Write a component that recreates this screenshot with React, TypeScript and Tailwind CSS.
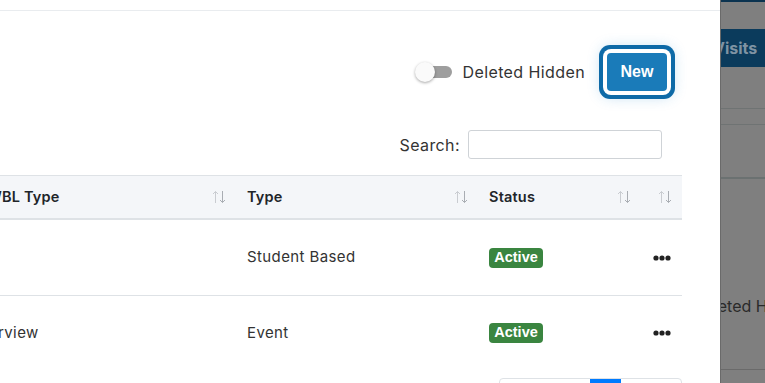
import React from "react";

const SortIcon = () => (
  <svg width="14" height="14" viewBox="0 0 14 14" fill="none" className="shrink-0">
    <path d="M3.5 13V1.5M1 4L3.5 1.5L6 4" stroke="#c9ccd1" strokeWidth="1" />
    <path d="M10.5 1V12.5M8 10L10.5 12.5L13 10" stroke="#a9adb3" strokeWidth="1" />
  </svg>
);

const Dots = () => (
  <svg width="18" height="6" viewBox="0 0 18 6" className="shrink-0">
    <circle cx="3" cy="3" r="2.6" fill="#222" />
    <circle cx="9" cy="3" r="2.6" fill="#222" />
    <circle cx="15" cy="3" r="2.6" fill="#222" />
  </svg>
);

const Badge = () => (
  <span className="inline-flex h-[20px] w-[54px] items-center justify-center rounded-[4px] bg-[#3a8540] text-[14.5px] font-bold tracking-normal text-white [font-family:'Liberation_Sans',Arial,sans-serif]">
    Active
  </span>
);

export default function App() {
  return (
    <div className="flex h-[383px] w-[765px] overflow-hidden bg-white text-[#212529] [font-family:Inter,'Noto_Sans',sans-serif]">
      <div className="flex w-[720px] shrink-0 flex-col overflow-hidden bg-white">
        <div className="h-[11px] shrink-0 border-b border-[#e9ecef]" />

        <div className="mt-[42px] flex h-[38px] items-center justify-end pr-[53px]">
          <div className="flex items-center">
            <div className="relative h-[12px] w-[37px]">
              <div className="absolute left-[10px] top-0 h-[12px] w-[27px] rounded-full bg-[#9e9e9e]" />
              <div className="absolute left-0 top-[-4px] h-[20px] w-[20px] rounded-full bg-[#fafafa] shadow-[0_1px_3px_rgba(0,0,0,0.35)]" />
            </div>
            <span className="ml-[10px] text-[16px] tracking-[0.4px] text-[#333]">Deleted Hidden</span>
          </div>
          <button className="ml-[22px] h-[38px] w-[60px] rounded-[4px] bg-[#1a7bb9] text-[16px] font-bold text-white ring-4 ring-[#0e6aa7] ring-offset-4 ring-offset-white shadow-[0_0_14px_6px_rgba(40,140,210,0.28)] [font-family:'Liberation_Sans',Arial,sans-serif]">
            New
          </button>
        </div>

        <div className="mt-[39px] flex items-center justify-end pr-[58px]">
          <span className="text-[16px] tracking-[0.4px] text-[#333]">Search:</span>
          <div className="ml-[8px] h-[29px] w-[194px] rounded-[3px] border border-[#cfd3d7] bg-white" />
        </div>

        <div className="ml-[-14px] mt-[16px] w-[696px] shrink-0">
          <div className="grid grid-cols-[251px_242px_162px_41px] border-t border-b-2 border-[#dee2e6] bg-[#f4f6f9]">
            <div className="flex h-[42px] items-center justify-between overflow-hidden pl-[10px] pr-[11px] text-[14.5px] font-semibold tracking-[0.2px]">
              <span className="ml-[-9px] whitespace-nowrap">WBL Type</span>
              <SortIcon />
            </div>
            <div className="flex h-[42px] items-center justify-between pl-[10px] pr-[11px] text-[14.5px] font-semibold tracking-[0.2px]">
              <span>Type</span>
              <SortIcon />
            </div>
            <div className="flex h-[42px] items-center justify-between pl-[10px] pr-[10px] text-[14.5px] font-semibold tracking-[0.2px]">
              <span>Status</span>
              <SortIcon />
            </div>
            <div className="flex h-[42px] items-center justify-end pr-[10px]">
              <SortIcon />
            </div>
          </div>

          <div className="grid h-[76px] grid-cols-[251px_242px_162px_41px] border-b border-[#dee2e6] text-[15px] tracking-[0.4px] text-[#333]">
            <div className="flex items-center pl-[10px]" />
            <div className="flex items-center pl-[10px]">Student Based</div>
            <div className="flex items-center pl-[10px]">
              <Badge />
            </div>
            <div className="flex items-center justify-center">
              <Dots />
            </div>
          </div>

          <div className="grid h-[74px] grid-cols-[251px_242px_162px_41px] text-[15px] tracking-[0.4px] text-[#333]">
            <div className="flex items-center overflow-hidden pl-[10px]">
              <span className="ml-[-26px] whitespace-nowrap">Interview</span>
            </div>
            <div className="flex items-center pl-[10px]">Event</div>
            <div className="flex items-center pl-[10px]">
              <Badge />
            </div>
            <div className="flex items-center justify-center">
              <Dots />
            </div>
          </div>

          <div className="mt-[8px] flex justify-end">
            <div className="flex h-[38px] overflow-hidden rounded-[4px] border border-[#dee2e6] text-[14px]">
              <div className="flex w-[90px] items-center justify-center text-[#6c757d]">Previous</div>
              <div className="mt-[-1px] flex w-[31px] items-center justify-center bg-[#007bff] text-white">1</div>
              <div className="flex w-[60px] items-center justify-center text-[#6c757d]">Next</div>
            </div>
          </div>
        </div>
      </div>

      <div className="flex w-[45px] shrink-0 flex-col overflow-hidden border-l border-[#6a6a6a] bg-[#7f7f7f]">
        <div className="h-[2px] shrink-0 bg-[#0b3350]" />
        <div className="h-[27px] shrink-0" />
        <div className="flex h-[38px] shrink-0 items-center bg-[#0b3b5c]">
          <span className="ml-[-8px] whitespace-nowrap text-[16px] font-bold text-[#7f93a3]">Visits</span>
        </div>
        <div className="h-[42px] shrink-0 border-b border-[#6f7373]" />
        <div className="h-[16px] shrink-0 border-b border-[#6f7373]" />
        <div className="h-[54px] shrink-0 border-b-2 border-[#6b7171]" />
        <div className="flex h-[191px] shrink-0 items-center border-b border-[#6a6a6a]">
          <span className="ml-[-28px] mt-[64px] whitespace-nowrap text-[16px] text-[#2a2a2a]">Deleted Hidden</span>
        </div>
      </div>
    </div>
  );
}
